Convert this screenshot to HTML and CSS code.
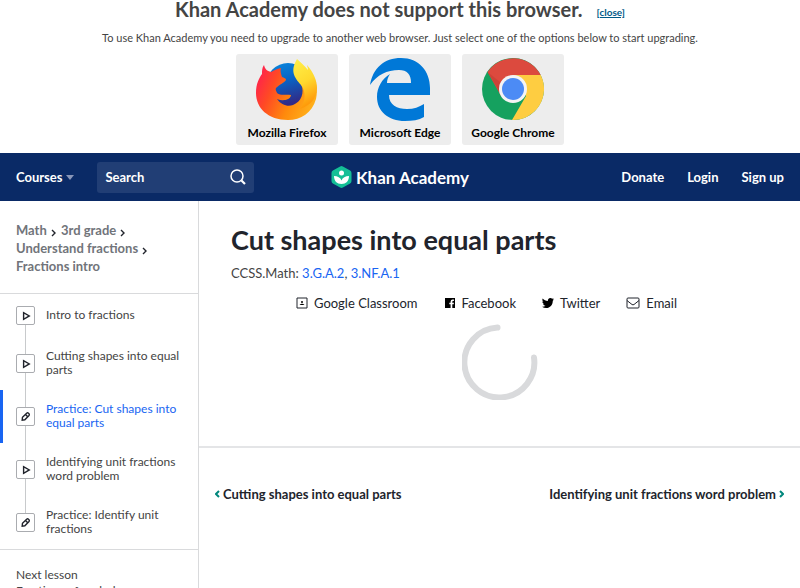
FILE: index.html
```html
<!DOCTYPE html>
<html lang="en">
<head>
    <meta charset="UTF-8">
    <meta name="viewport" content="width=device-width, initial-scale=1.0">
    <title>Cut shapes into equal parts | Khan Academy</title>
    <link rel="stylesheet" href="styles.css">
</head>
<body>
    <section class="upgrade">
        <div class="upgrade-title">
            <h2>Khan Academy does not support this browser.</h2>
            <a href="#">[close]</a>
        </div>
        <p>To use Khan Academy you need to upgrade to another web browser. Just select one of the options below to start upgrading.</p>
        <div class="browsers">
            <a class="browser" href="#">
                <svg viewBox="0 0 64 64" aria-hidden="true">
                    <defs>
                        <linearGradient id="fox-body" x1="0" y1="0.2" x2="1" y2="0.6">
                            <stop offset="0" stop-color="#ff1f50"/>
                            <stop offset="0.3" stop-color="#ff4a24"/>
                            <stop offset="0.65" stop-color="#ff8a0c"/>
                            <stop offset="1" stop-color="#ffb01a"/>
                        </linearGradient>
                        <linearGradient id="fox-tail" x1="0" y1="0" x2="0.3" y2="1">
                            <stop offset="0" stop-color="#fff04a"/>
                            <stop offset="0.55" stop-color="#ffd92e"/>
                            <stop offset="1" stop-color="#ff9a0a"/>
                        </linearGradient>
                        <linearGradient id="fox-globe" x1="0" y1="0" x2="0.3" y2="1">
                            <stop offset="0" stop-color="#0a8be0"/>
                            <stop offset="0.5" stop-color="#0a62c4"/>
                            <stop offset="1" stop-color="#312a86"/>
                        </linearGradient>
                    </defs>
                    <circle cx="33" cy="28" r="22" fill="url(#fox-globe)"/>
                    <path fill="url(#fox-body)" d="M9 8C10 12 12 14 16 15C19 13 22 12 26 11C25 14 26 17 27 20C29 21 31 21 31 23C29 26 25 27 21 31C20 33 22 35 22 36C26 39 30 37 36 38C36 41 32 43 29 43C26 44 23 42 22 42C26 48 33 50 38 48C46 45 50 36 46 27C44 22 50 15 54 14C62 22 63 34 61 42C57 56 46 63 33 63C13 63 1 51 1 36C1 27 4 21 7 17C7 13 7 11 9 8z"/>
                    <path fill="url(#fox-tail)" d="M42 2C46 6 50 9 53 13C53 11 52 9 52 8C59 16 62 24 62 31C61 42 56 48 45 52C51 45 51 34 46 28C39 20 35 14 42 2z"/>
                </svg>
                <span>Mozilla Firefox</span>
            </a>
            <a class="browser" href="#">
                <svg viewBox="0 0 64 64" aria-hidden="true">
                    <path fill="#0078d7" d="M2 28C5 11 16 1 33 1c18 0 29 13 29 30v7H21c0 10 8 14 18 14 7 0 12-2 17-5v13c-5 3-12 4-19 4C20 64 9 54 9 40c0-10 5-18 13-23-2 3-3 6-3 9h24c0-9-4-13-12-13C19 13 9 18 2 28z"/>
                </svg>
                <span>Microsoft Edge</span>
            </a>
            <a class="browser" href="#">
                <svg viewBox="0 0 64 64" aria-hidden="true">
                    <circle cx="32" cy="32" r="31" fill="#15a15f"/>
                    <path fill="#fecd41" d="M32 18h27.700A31 31 0 0 1 31 63l14-24z"/>
                    <path fill="#dc4a3e" d="M6.500 15A31 31 0 0 1 59.700 18H32L20 39z"/>
                    <path fill="#c43d33" opacity="0.600" d="M6.500 15l12 20 3-8z"/>
                    <circle cx="32" cy="32" r="14" fill="#f4f4f4"/>
                    <circle cx="32" cy="32" r="11" fill="#4c8bf5"/>
                </svg>
                <span>Google Chrome</span>
            </a>
        </div>
    </section>

    <header class="navbar">
        <div class="nav-left">
            <button class="courses" type="button">Courses
                <svg viewBox="0 0 8 5" aria-hidden="true"><path d="M0 0h8L4 5z" fill="#8996b8"/></svg>
            </button>
            <form class="search">
                <input type="search" placeholder="Search" aria-label="Search">
                <button type="submit" aria-label="Submit search">
                    <svg viewBox="0 0 16 16" fill="none" stroke="#fff" aria-hidden="true">
                        <circle cx="7" cy="7" r="6" stroke-width="1.500"/>
                        <path d="M11.500 11.500l3.500 3.500" stroke-width="2.200"/>
                    </svg>
                </button>
            </form>
        </div>
        <a class="logo" href="#">
            <svg viewBox="0 0 20 22" aria-hidden="true">
                <path fill="#14bf96" d="M8.600.400a3 3 0 0 1 2.800 0l7.200 4.100A2.800 2.800 0 0 1 20 7v8a2.800 2.800 0 0 1-1.400 2.500l-7.200 4.100a3 3 0 0 1-2.800 0l-7.200-4.100A2.800 2.800 0 0 1 0 15V7a2.800 2.800 0 0 1 1.400-2.500z"/>
                <circle cx="10" cy="7" r="2.500" fill="#fff"/>
                <path fill="#fff" d="M10 18c-4.500 0-7.500-3-7.500-8 3.500 0 6.500 1.500 7.500 4.500 1-3 4-4.500 7.500-4.500 0 5-3 8-7.500 8z"/>
            </svg>
            <span>Khan Academy</span>
        </a>
        <nav class="nav-right">
            <a href="#">Donate</a>
            <a href="#">Login</a>
            <a href="#">Sign up</a>
        </nav>
    </header>

    <div class="page">
        <aside class="sidebar">
            <nav class="breadcrumbs">
                <a href="#">Math</a><svg viewBox="0 0 5 8"><path d="M1 1l3 3-3 3"/></svg>
                <a href="#">3rd grade</a><svg viewBox="0 0 5 8"><path d="M1 1l3 3-3 3"/></svg>
                <a href="#">Understand fractions</a><svg viewBox="0 0 5 8"><path d="M1 1l3 3-3 3"/></svg>
                <a href="#">Fractions intro</a>
            </nav>
            <ul class="lessons">
                <li>
                    <a href="#">
                        <span class="icon"><svg viewBox="0 0 18 18"><path d="M7 6v7l6-3.500z"/></svg></span>
                        <span>Intro to fractions</span>
                    </a>
                </li>
                <li>
                    <a href="#">
                        <span class="icon"><svg viewBox="0 0 18 18"><path d="M7 6v7l6-3.500z"/></svg></span>
                        <span>Cutting shapes into equal parts</span>
                    </a>
                </li>
                <li class="active">
                    <a href="#">
                        <span class="icon"><svg viewBox="0 0 18 18"><path d="M5.500 12.800l.300-3 4.400-4.300q1-.800 2 0l.500.500q.800 1 0 2L8.300 12.400zM9 7l2.300 2.300"/></svg></span>
                        <span>Practice: Cut shapes into equal parts</span>
                    </a>
                </li>
                <li>
                    <a href="#">
                        <span class="icon"><svg viewBox="0 0 18 18"><path d="M7 6v7l6-3.500z"/></svg></span>
                        <span>Identifying unit fractions word problem</span>
                    </a>
                </li>
                <li>
                    <a href="#">
                        <span class="icon"><svg viewBox="0 0 18 18"><path d="M5.500 12.800l.300-3 4.400-4.300q1-.800 2 0l.500.500q.800 1 0 2L8.300 12.400zM9 7l2.300 2.300"/></svg></span>
                        <span>Practice: Identify unit fractions</span>
                    </a>
                </li>
            </ul>
            <a class="next-lesson" href="#">Next lesson<br>Fractions of a whole</a>
        </aside>

        <main class="content">
            <section class="exercise">
                <h1>Cut shapes into equal parts</h1>
                <p class="standards">CCSS.Math: <a href="#">3.G.A.2</a>, <a href="#">3.NF.A.1</a></p>
                <div class="share">
                    <a href="#">
                        <svg viewBox="0 0 12 12"><path fill="none" stroke="#21242c" d="M1 1h10v10H1z"/><circle cx="6" cy="5" r="1"/><path d="M3.500 8Q6 5.500 8.500 8z"/></svg>
                        Google Classroom
                    </a>
                    <a href="#">
                        <svg viewBox="0 0 12 12"><path d="M1 1h10v10H8.300V7.300h1.400l.200-1.600H8.300v-1q0-.7.800-.7h.8V2.500H8.600q-2 0-2 2v1.200H5.300v1.600h1.300V11H1z"/></svg>
                        Facebook
                    </a>
                    <a href="#">
                        <svg viewBox="0 0 12 12"><path d="M12 2.500l-1.200 1.200C10.800 8 8 11 4.200 11 2.600 11 1.200 10.600 0 9.800c1.300.1 2.500-.2 3.500-1C2.300 8.700 1.500 8 1.200 7h1.100C1 6.700.3 5.700.3 4.500l1.100.3C.3 4 .1 2.600.7 1.500 2 3 3.700 4 5.900 4.100 5.500 2.400 6.800 1 8.400 1c.7 0 1.300.3 1.800.8l1.500-.6-1 1.400z"/></svg>
                        Twitter
                    </a>
                    <a href="#">
                        <svg class="mail" viewBox="0 0 14 12" fill="none" stroke="#21242c"><rect x="1" y="1" width="12" height="10" rx="1"/><path d="M1 3.500l5 4q1 .7 2 0l5-4"/></svg>
                        Email
                    </a>
                </div>
                <svg class="spinner" viewBox="0 0 76 76" aria-label="Loading">
                    <path d="M35.500 3.500A35 35 0 1 0 72 33.500"/>
                </svg>
            </section>
            <nav class="pager">
                <a href="#"><svg viewBox="0 0 5 8"><path d="M4 1L1 4l3 3"/></svg>Cutting shapes into equal parts</a>
                <a href="#">Identifying unit fractions word problem<svg viewBox="0 0 5 8"><path d="M1 1l3 3-3 3"/></svg></a>
            </nav>
        </main>
    </div>
</body>
</html>
```
FILE: styles.css
```css
* {
    box-sizing: border-box;
}
body {
    display: flex;
    flex-direction: column;
    height: 100vh;
    margin: 0;
    overflow: hidden;
    font-family: Lato, "Liberation Sans", sans-serif;
    font-size: 12px;
    color: #444;
    background: #fff;
}
a {
    color: inherit;
    text-decoration: none;
}
h1, h2, p, ul {
    margin: 0;
    padding: 0;
}
button, input {
    font: inherit;
    color: inherit;
    background: none;
    border: 0;
    padding: 0;
}

/* upgrade banner */
.upgrade {
    flex: none;
    text-align: center;
    padding-bottom: 8px;
}
.upgrade-title {
    display: flex;
    justify-content: center;
    align-items: center;
    gap: 14px;
    height: 18px;
    line-height: 18px;
}
.upgrade-title h2 {
    font-size: 20px;
}
.upgrade-title a {
    padding-top: 6px;
    font-size: 10px;
    font-weight: bold;
    color: #005a88;
    text-decoration: underline;
}
.upgrade p {
    margin-top: 12px;
    font-size: 11px;
    line-height: 16px;
}
.browsers {
    display: flex;
    justify-content: center;
    gap: 11px;
    margin-top: 8px;
}
.browser {
    width: 102px;
    height: 91px;
    padding-top: 3px;
    border-radius: 3px;
    background: #ededed;
    color: #000;
    font-weight: bold;
    line-height: 16px;
}
.browser svg {
    display: block;
    width: 64px;
    height: 64px;
    margin: 0 auto 4px;
}

/* top navigation */
.navbar {
    flex: none;
    display: grid;
    grid-template-columns: 1fr auto 1fr;
    align-items: center;
    height: 48px;
    padding: 0 16px;
    background: #0a2a66;
    color: #fff;
    font-size: 13px;
    font-weight: bold;
}
.nav-left, .nav-right {
    display: flex;
    align-items: center;
    gap: 23px;
}
.nav-right {
    justify-content: flex-end;
}
.courses {
    display: flex;
    align-items: center;
    gap: 4px;
}
.courses svg {
    width: 8px;
    height: 5px;
}
.search {
    display: flex;
    align-items: center;
    width: 157px;
    height: 31px;
    padding: 0 8px;
    border-radius: 3px;
    background: #213e75;
}
.search input {
    flex: 1;
    min-width: 0;
    outline: none;
}
.search input::placeholder {
    color: #fff;
    opacity: 1;
}
.search svg {
    display: block;
    width: 16px;
    height: 16px;
}
.logo {
    display: flex;
    align-items: center;
    gap: 4px;
    font-size: 17px;
}
.logo svg {
    width: 21px;
    height: 22px;
}

.page {
    flex: 1;
    display: flex;
    min-height: 0;
}

/* sidebar */
.sidebar {
    flex: none;
    width: 199px;
    border-right: 1px solid #d9dadc;
    overflow: hidden;
}
.breadcrumbs {
    padding: 20px 16px 18px;
    border-bottom: 1px solid #d9dadc;
    color: #71747a;
    font-size: 13px;
    font-weight: bold;
    line-height: 18px;
}
.breadcrumbs svg {
    width: 5px;
    height: 8px;
    margin: 0 2px 0 4px;
    vertical-align: -2px;
    fill: none;
    stroke: #21242c;
    stroke-width: 1.4;
}
.lessons {
    list-style: none;
    border-bottom: 1px solid #d9dadc;
}
.lessons li {
    border-left: 3px solid transparent;
}
.lessons a {
    display: flex;
    align-items: center;
    gap: 11px;
    padding: 0 16px 0 13px;
    line-height: 14px;
}
.lessons a > span:last-child {
    padding: 12px 0 13px;
}
.lessons .active {
    border-color: #1865f2;
    color: #1865f2;
}
.icon {
    flex: none;
    display: flex;
    flex-direction: column;
    align-self: stretch;
    align-items: center;
    min-height: 43px;
}
/* line joining the steps */
.icon::before, .icon::after {
    content: "";
    flex: 1;
    width: 1px;
    background: #c8cacc;
}
.lessons li:first-child .icon::before,
.lessons li:last-child .icon::after {
    background: none;
}
.icon svg {
    width: 19px;
    height: 19px;
    border: 1px solid #aaacb0;
    border-radius: 2px;
    fill: none;
    stroke: #21242c;
    stroke-width: 1.5;
}
.next-lesson {
    display: block;
    padding: 17px 16px;
    line-height: 16px;
}

/* content */
.content {
    flex: 1;
    min-width: 0;
}
.exercise {
    padding: 20px 32px 46px;
    border-bottom: 2px solid #e4e5e7;
}
h1 {
    font-size: 27px;
    line-height: 38px;
    color: #21242c;
}
.standards {
    margin-top: 4px;
    line-height: 20px;
    font-size: 13px;
}
.standards a {
    color: #1865f2;
}
.share {
    display: flex;
    justify-content: center;
    gap: 26px;
    margin: 10px 0 11px;
    padding-right: 26px;
    line-height: 20px;
    font-size: 13px;
    color: #21242c;
}
.share a {
    display: flex;
    align-items: center;
    gap: 6px;
}
.share svg {
    width: 12px;
    height: 12px;
}
.share .mail {
    width: 14px;
}
.spinner {
    display: block;
    width: 76px;
    height: 76px;
    margin: 0 auto;
    fill: none;
    stroke: #d9dadc;
    stroke-width: 6;
    stroke-linecap: round;
}
.pager {
    display: flex;
    justify-content: space-between;
    padding: 37px 16px;
    font-size: 13px;
    font-weight: bold;
    line-height: 18px;
    color: #21242c;
}
.pager a {
    display: flex;
    align-items: center;
    gap: 3px;
}
.pager svg {
    width: 5px;
    height: 8px;
    fill: none;
    stroke: #00877c;
    stroke-width: 2;
}
```
